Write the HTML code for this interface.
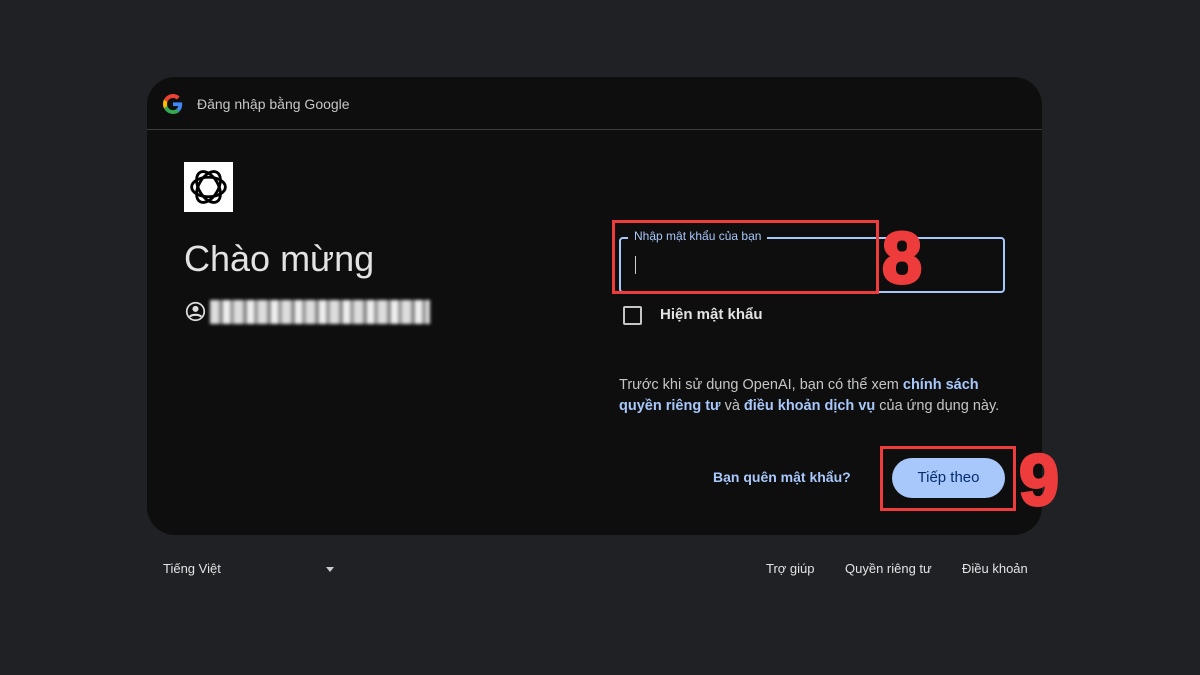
<!DOCTYPE html>
<html><head><meta charset="utf-8"><style>
body{margin:0;width:1200px;height:675px;background:#202124;font-family:"Liberation Sans",sans-serif;position:relative;overflow:hidden;color:#e3e3e3}
.a{position:absolute}
.card{left:147px;top:77px;width:895px;height:458px;background:#0e0e0e;border-radius:28px}
.hl{left:147px;top:129px;width:895px;height:1px;background:#3c3c3c}
.blur{left:210px;top:300px;width:220px;height:24px;background:repeating-linear-gradient(90deg,#ddd 0 9px,#888 9px 13px,#eee 13px 20px,#999 20px 24px);filter:blur(1.5px)}
.num{font-size:72px;font-weight:bold;color:#ee3b3b;line-height:74px;-webkit-text-stroke:3px #ee3b3b}
</style></head><body>
<div class="a card"></div>
<div class="a hl"></div>
<svg class="a" style="left:163px;top:94px" width="20" height="20" viewBox="0 0 48 48"><path fill="#EA4335" d="M24 9.5c3.5 0 6.7 1.2 9.2 3.6l6.9-6.9C35.9 2.4 30.4 0 24 0 14.6 0 6.6 5.4 2.6 13.3l8 6.2C12.5 13.7 17.8 9.5 24 9.5z"/><path fill="#4285F4" d="M46.1 24.5c0-1.600-.1-3.1-.4-4.5H24v9h12.4c-.5 2.9-2.2 5.3-4.6 7l7.5 5.8c4.4-4 6.8-10 6.8-17.3z"/><path fill="#FBBC05" d="M10.5 28.6c-.5-1.5-.8-3-.8-4.6s.3-3.1.8-4.6l-8-6.2C.9 16.5 0 20.1 0 24s.9 7.5 2.6 10.7l7.9-6.1z"/><path fill="#34A853" d="M24 48c6.5 0 11.9-2.1 15.9-5.8l-7.5-5.8c-2.1 1.4-4.900 2.3-8.4 2.3-6.2 0-11.5-4.2-13.4-9.9l-8 6.1C6.6 42.6 14.6 48 24 48z"/></svg>
<div class="a" style="left:197px;top:96px;font-size:14px;color:#c4c7c5">Đăng nhập bằng Google</div>
<div class="a" style="left:184px;top:162px;width:49px;height:50px;background:#fff"></div>
<svg class="a" style="left:186px;top:164px" width="45" height="46" viewBox="0 0 24 24"><g fill="none" stroke="#000" stroke-width="1.5"><ellipse cx="12" cy="12" rx="9" ry="5.2"/><ellipse cx="12" cy="12" rx="9" ry="5.2" transform="rotate(60 12 12)"/><ellipse cx="12" cy="12" rx="9" ry="5.2" transform="rotate(120 12 12)"/></g></svg>
<div class="a" style="left:184px;top:238px;font-size:36px;color:#e3e3e3">Chào mừng</div>
<svg class="a" style="left:185px;top:301px" width="21" height="21" viewBox="0 0 24 24"><circle cx="12" cy="12" r="10" fill="none" stroke="#ddd" stroke-width="2"/><circle cx="12" cy="9" r="3.5" fill="#ddd"/><path d="M5.5 18c2-3 11-3 13 0" stroke="#ddd" stroke-width="2.5" fill="none"/></svg>
<div class="a blur"></div>
<div class="a" style="left:619px;top:237px;width:386px;height:56px;border:2px solid #a8c7fa;border-radius:4px;box-sizing:border-box"></div>
<div class="a" style="left:628px;top:229px;padding:0 6px;background:#0e0e0e;font-size:12px;color:#a8c7fa">Nhập mật khẩu của bạn</div>
<div class="a" style="left:635px;top:256px;width:1px;height:18px;background:#ccc"></div>
<div class="a" style="left:612px;top:220px;width:267px;height:74px;border:3px solid #ee3b3b;box-sizing:border-box"></div>
<div class="a num" style="left:882px;top:222px">8</div>
<div class="a" style="left:623px;top:306px;width:15px;height:15px;border:2px solid #c4c7c5;border-radius:2px"></div>
<div class="a" style="left:660px;top:306px;font-size:15px;font-weight:bold;color:#e3e3e3">Hiện mật khẩu</div>
<div class="a" style="left:619px;top:375px;width:392px;font-size:14.5px;line-height:21px;color:#c4c7c5">Trước khi sử dụng OpenAI, bạn có thể xem <b style="color:#a8c7fa">chính sách</b><br><b style="color:#a8c7fa">quyền riêng tư</b> và <b style="color:#a8c7fa">điều khoản dịch vụ</b> của ứng dụng này.</div>
<div class="a" style="left:713px;top:469px;font-size:14px;font-weight:bold;color:#a8c7fa">Bạn quên mật khẩu?</div>
<div class="a" style="left:892px;top:458px;width:113px;height:40px;border-radius:20px;background:#a8c7fa;color:#062e6f;font-size:15px;text-align:center;line-height:40px">Tiếp theo</div>
<div class="a" style="left:880px;top:446px;width:136px;height:65px;border:3px solid #ee3b3b;box-sizing:border-box"></div>
<div class="a num" style="left:1019px;top:444px">9</div>
<div class="a" style="left:163px;top:561px;font-size:13px;color:#e3e3e3">Tiếng Việt</div>
<div class="a" style="left:326px;top:567px;border:4px solid transparent;border-top:5px solid #ccc"></div>
<div class="a" style="left:766px;top:561px;font-size:13px;color:#e3e3e3">Trợ giúp</div>
<div class="a" style="left:845px;top:561px;font-size:13px;color:#e3e3e3">Quyền riêng tư</div>
<div class="a" style="left:962px;top:561px;font-size:13px;color:#e3e3e3">Điều khoản</div>
</body></html>
